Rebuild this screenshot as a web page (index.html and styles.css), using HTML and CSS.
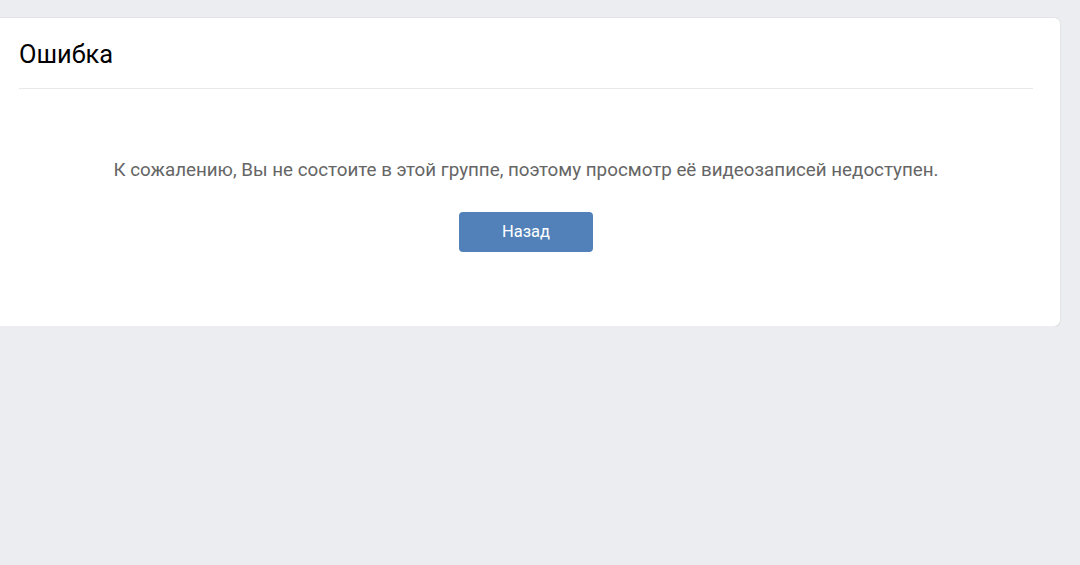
FILE: index.html
```html
<!DOCTYPE html>
<html>
<head lang="ru">
    <meta charset="UTF-8">
    <title>Ошибка</title>
    <link rel="stylesheet" href="styles.css">
</head>
<body>
<div id="page">
    <div class="box">
        <div class="box_head">Ошибка</div>
        <div class="box_body">
            <div class="msg">К сожалению, Вы не состоите в этой группе, поэтому просмотр её видеозаписей недоступен.</div>
            <a href="javascript:" class="btn">Назад</a>
        </div>
    </div>
</div>
</body>
</html>
```

FILE: styles.css
```css
html, body{
    margin: 0;
    padding: 0;
    background: #ebedf0;
    font-family: Roboto, "Liberation Sans", sans-serif;
}
#page{
    padding: 18px 20px 0 0;
}
.box{
    margin-left: -8px;
    background: #fff;
    border-radius: 6px;
    box-shadow: 0 1px 0 0 #d7d8db, 0 0 0 1px #e3e4e8;
    padding: 0 27px;
}
.box_head{
    height: 70px;
    line-height: 72px;
    font-size: 25.4px;
    color: #000;
    border-bottom: 1px solid #e7e8ec;
}
.box_body{
    padding: 68px 0 74px;
    text-align: center;
}
.msg{
    font-size: 18.8px;
    line-height: 26px;
    color: #656565;
}
.btn{
    display: inline-block;
    margin-top: 29px;
    width: 134px;
    height: 40px;
    line-height: 39px;
    background: #5181b8;
    color: #fff;
    font-size: 16.5px;
    border-radius: 4px;
    text-decoration: none;
}
```
